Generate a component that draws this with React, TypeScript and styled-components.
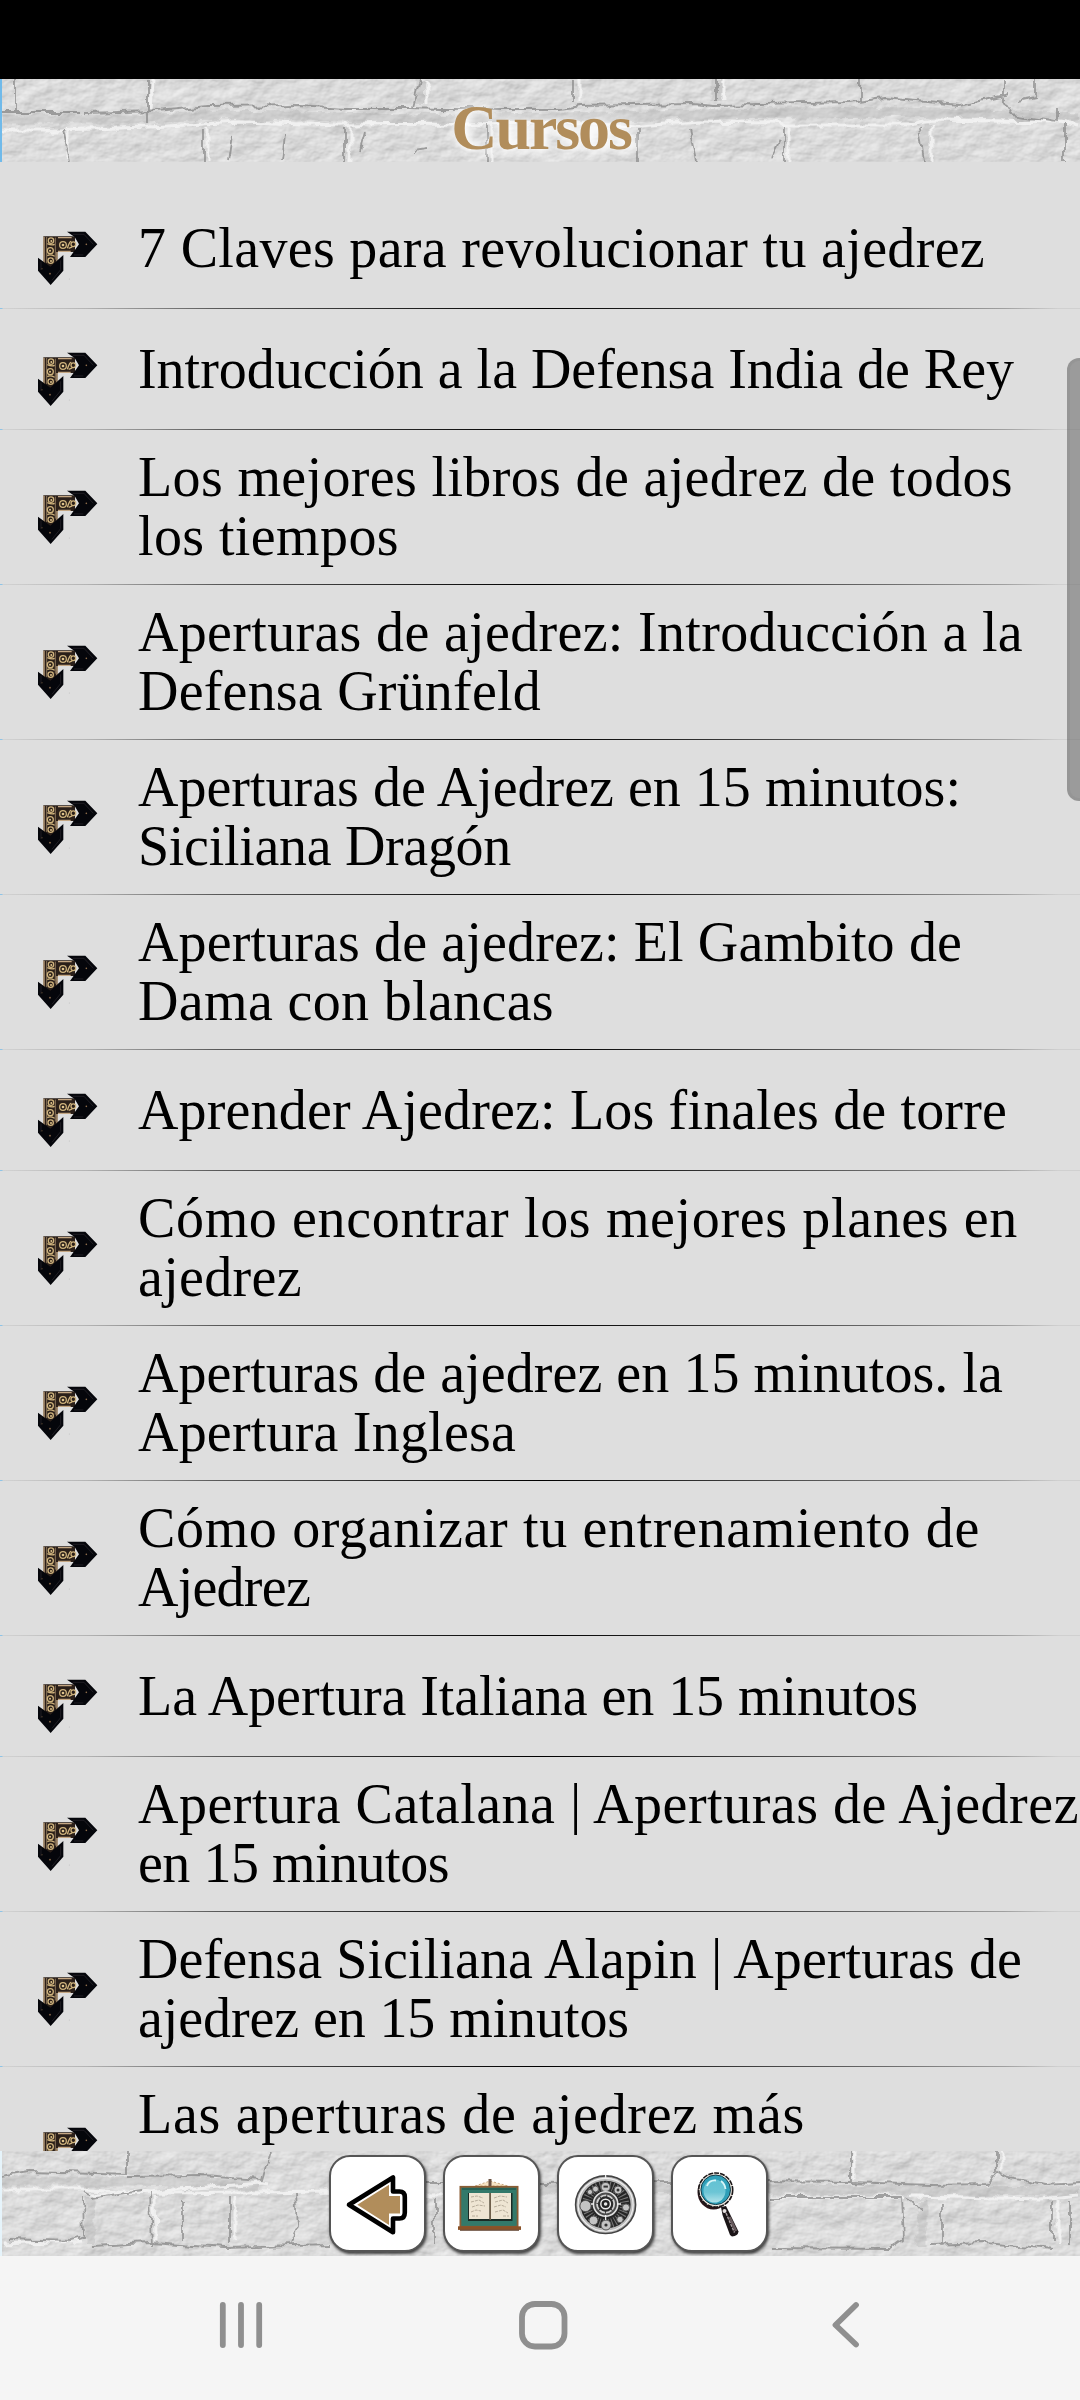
import React, { useLayoutEffect, useRef, useState } from "react";
import styled, { createGlobalStyle } from "styled-components";

const GlobalStyle = createGlobalStyle`
    body {
        margin: 0;
        background-color: #dedede;
    }
    * {
        box-sizing: border-box;
    }
`
const Screen = styled.div`
    display: flex;
    flex-direction: column;
    width: 1080px;
    height: 2400px;
    overflow: hidden;
    font-family: "Liberation Serif", serif;
`
const StatusBar = styled.div`
    flex: none;
    height: 79px;
    background-color: #000000;
`
const Wall = styled.div<{ $height: number; $edge: string }>`
    position: relative;
    display: flex;
    flex: none;
    justify-content: center;
    height: ${(p) => p.$height}px;
    border-left: 2px solid ${(p) => p.$edge};
    overflow: hidden;
`
const WallDrawing = styled.svg`
    position: absolute;
    top: 0;
    left: 0;
    z-index: 0;
`
const Title = styled.h1`
    position: relative;
    margin: 0;
    padding-top: 13px;
    font-size: 64px;
    line-height: 72px;
    font-weight: bold;
    letter-spacing: -2.1px;
    color: #b18d5b;
    text-shadow: 0 0 12px #ffffff, 3px 3px 8px #ffffff;
`
const ListArea = styled.div`
    position: relative;
    flex: none;
    height: 1989px;
    padding-top: 26px;
    overflow: hidden;
    background-color: #dedede;
`
const Row = styled.div`
    display: flex;
    align-items: center;
    gap: 28px;
    padding: 18px 0 18px 26px;
`
const RowIcon = styled.svg`
    flex: none;
    width: 84px;
    height: 84px;
`
const RowText = styled.div<{ $rows: number }>`
    display: flex;
    flex-direction: column;
    align-items: flex-start;
    height: ${(p) => p.$rows * 59}px;
`
const TextLine = styled.span`
    height: 59px;
    font-size: 56px;
    line-height: 58px;
    white-space: nowrap;
    color: #000000;
`
const Divider = styled.div`
    height: 1px;
    background: linear-gradient(
        90deg,
        #8fc4e6 0, #8fc4e6 2px, #d2d2d2 3px, #b4b4b4 8%, #5a5a5a 20%, #222222 38%,
        #000000 50%, #333333 66%, #6c6c6c 82%, #a0a0a0 93%, #d0d0d0 98%
    );
`
const ScrollThumb = styled.div`
    position: absolute;
    top: 196px;
    right: 0;
    width: 13px;
    height: 443px;
    border: 3px solid rgba(120, 120, 120, 0.15);
    border-right: none;
    border-radius: 12px 0 0 12px;
    background-color: rgba(100, 100, 100, 0.55);
`
const Tools = styled.div`
    position: relative;
    display: flex;
    gap: 18px;
    padding-top: 4px;
    margin-left: 14px;
`
const ToolButton = styled.button`
    width: 97px;
    height: 97px;
    margin-right: -1px;
    padding: 0;
    border: 2px solid #555555;
    border-radius: 21px;
    background-color: #ffffff;
    box-shadow: 1px 2px 3px rgba(0, 0, 0, 0.7);
    svg {
        display: block;
        margin: -2px;
    }
`
const NavBar = styled.div`
    display: flex;
    flex: 1;
    justify-content: space-between;
    align-items: flex-start;
    padding: 41px 205px 0 211px;
    background-color: #f5f5f5;
    svg {
        fill: none;
        stroke: #8f8f8f;
        stroke-width: 5.8;
        stroke-linecap: round;
        stroke-linejoin: round;
    }
`

// each entry: [text, drawn width]
type LineData = [string, number];

const courses: LineData[][] = [
    [["7 Claves para revolucionar tu ajedrez", 847]],
    [["Introducción a la Defensa India de Rey", 876]],
    [["Los mejores libros de ajedrez de todos", 875], ["los tiempos", 261]],
    [["Aperturas de ajedrez: Introducción a la", 885], ["Defensa Grünfeld", 403]],
    [["Aperturas de Ajedrez en 15 minutos:", 823], ["Siciliana Dragón", 373]],
    [["Aperturas de ajedrez: El Gambito de", 824], ["Dama con blancas", 416]],
    [["Aprender Ajedrez: Los finales de torre", 869]],
    [["Cómo encontrar los mejores planes en", 880], ["ajedrez", 164]],
    [["Aperturas de ajedrez en 15 minutos. la", 865], ["Apertura Inglesa", 378]],
    [["Cómo organizar tu entrenamiento de", 842], ["Ajedrez", 172]],
    [["La Apertura Italiana en 15 minutos", 780]],
    [["Apertura Catalana | Aperturas de Ajedrez", 941], ["en 15 minutos", 311]],
    [["Defensa Siciliana Alapin | Aperturas de", 884], ["ajedrez en 15 minutos", 491]],
    [["Las aperturas de ajedrez más", 667]],
];

const FittedLine = ({ text, width }: { text: string; width: number }) => {
    const lineRef = useRef<HTMLSpanElement>(null);
    const [spacing, setSpacing] = useState(0);

    useLayoutEffect(() => {
        if (lineRef.current) {
            const natural = lineRef.current.getBoundingClientRect().width;
            setSpacing((width - natural) / text.length);
        }
    }, [text, width]);

    return <TextLine ref={lineRef} style={{ letterSpacing: `${spacing}px` }}>{text}</TextLine>
};

const CourseIcon = () => (
    <RowIcon viewBox="0 0 84 84">
        <g transform="translate(4 14.3) scale(0.3333)">
            <path d="M40 48H135V95H83V150H40Z" fill="#2a1f19" />
            <path d="M42 49V135M81 95V125M84 52H125M84 93H122" stroke="#c4a682" strokeWidth="4" />
            <path d="M50 50V128M76 52V118" stroke="#8a735a" strokeWidth="3" />
            <g fill="none" stroke="#d0b47e" strokeWidth="3.8">
                <circle cx="63" cy="61" r="8" />
                <circle cx="61" cy="91" r="9" />
                <circle cx="62" cy="121" r="8" />
                <circle cx="99" cy="74" r="10" />
                <circle cx="130" cy="72" r="7" />
                <path d="M52 70Q65 76 74 72M52 106Q60 101 74 108M112 84Q120 60 124 64M116 84L127 80" />
            </g>
            <g fill="#e0c48c">
                <circle cx="64" cy="62" r="3" />
                <circle cx="60" cy="91" r="3" />
                <circle cx="99" cy="74" r="4" />
                <circle cx="63" cy="122" r="3" />
            </g>
            <path d="M111 34H166L202 72L166 110H120L147 72L134 50Z" fill="#05060b" />
            <path d="M24 112L61 139L100 104V151L62 194L24 151Z" fill="#05060b" />
            <path d="M128 42H162L190 72M132 104H160M33 124V149M92 120V148L66 180" fill="none" stroke="#2d2b31" strokeWidth="2" />
            <circle cx="169" cy="72" r="2.5" fill="#94724f" />
            <circle cx="60" cy="160" r="2.5" fill="#94724f" />
            <circle cx="36" cy="145" r="1.5" fill="#94724f" />
            <circle cx="118" cy="176" r="1.5" fill="#bdbdbd" />
        </g>
    </RowIcon>
);

interface WallProps {
    id: string;
    height: number;
    dark: string;
    light: string;
    shade: string;
    seed: number;
}

const BrickWall = ({ id, height, dark, light, shade, seed }: WallProps) => (
    <WallDrawing width="1078" height={height} viewBox={`2 0 1078 ${height}`}>
        <defs>
            <filter id={`${id}-plaster`} x="0" y="0" width="100%" height="100%" colorInterpolationFilters="sRGB">
                <feTurbulence type="fractalNoise" baseFrequency="0.04 0.06" numOctaves="4" seed={seed} />
                <feDiffuseLighting surfaceScale="1.3" diffuseConstant="1" lightingColor="#f1f1f1">
                    <feDistantLight azimuth="235" elevation="65" />
                </feDiffuseLighting>
            </filter>
            <filter id={`${id}-rough`} x="-2%" y="-10%" width="104%" height="120%">
                <feTurbulence type="fractalNoise" baseFrequency="0.06" numOctaves="3" seed={seed + 2} result="n" />
                <feDisplacementMap in="SourceGraphic" in2="n" scale="10" xChannelSelector="R" yChannelSelector="G" />
                <feGaussianBlur stdDeviation="0.6" />
            </filter>
        </defs>
        <rect width="1080" height={height} filter={`url(#${id}-plaster)`} />
        <g fill="none" filter={`url(#${id}-rough)`}>
            <path d={shade} stroke="#a8a8a8" strokeWidth="9" opacity="0.3" />
            <path d={light} stroke="#f4f4f4" strokeWidth="3" opacity="0.85" />
            <path d={dark} stroke="#858585" strokeWidth="1.8" opacity="0.75" />
        </g>
    </WallDrawing>
);

const App = () => {
    return <>
        <GlobalStyle />
        <Screen>
            <StatusBar />
            <Wall $height={83} $edge="#70baea">
                <BrickWall
                    id="top"
                    height={83}
                    seed={4}
                    dark="M2 33H80M84 34L155 32L210 27L300 26L345 29H410L440 30L560 30L580 27L690 25L715 27L850 24L885 19L960 26L1010 15M15 0V32M148 0V45M420 0L412 28M573 0V24M716 0V22M860 0V22M1003 0V22L1012 36L1058 43V28M1036 0V18L1015 22M63 50L70 83M203 50V83M345 48V83M232 56L228 83M285 55L282 80M412 72L425 70M487 45V83M365 52L360 70M638 50V83M690 50L697 83M785 47V83M920 48L925 83M1065 45V83M780 60L770 80"
                    light="M2 51H60L150 48L240 43L340 46L460 45L560 44L640 47L700 42L775 43L785 46H910L930 41L1060 43L1080 47M152 0L150 30M426 0V25M580 0V24M722 0V20M68 48V80M208 48V83M350 48V83M492 45V83M790 47V83M932 45V83"
                    shade="M2 40H150L200 36L305 37L400 40L560 38L700 35L900 33L1080 38M927 45V83M716 0V22M420 0V25"
                />
                <Title>Cursos</Title>
            </Wall>
            <ListArea>
                {courses.map((lines, i) => (
                    <React.Fragment key={lines[0][0]}>
                        <Row>
                            <CourseIcon />
                            {/* the last course runs on below the visible area */}
                            <RowText $rows={i === courses.length - 1 ? 2 : lines.length}>
                                {lines.map(([text, width]) => <FittedLine key={text} text={text} width={width} />)}
                            </RowText>
                        </Row>
                        <Divider />
                    </React.Fragment>
                ))}
                <ScrollThumb />
            </ListArea>
            <Wall $height={105} $edge="#e6f4fb">
                <BrickWall
                    id="bottom"
                    height={105}
                    seed={9}
                    dark="M2 25L30 20L128 23V0M130 26L200 25L262 29L270 0M85 40L90 43M90 47L140 40M83 45L84 86L70 90L10 88M150 42L152 96M230 45V94M295 42L297 75L290 94M92 95L150 92L225 97L330 94M183 50V88M420 32H540L680 31L760 30L850 31L930 34L990 33L998 22L1010 28L1045 34L1080 32M852 0V30M996 0V22M770 46H902L904 88L890 98L770 97M907 45L920 60M942 50V95M1052 50V88M930 94L985 92L1052 98M1070 50V95M435 48V92"
                    light="M2 38H90L150 42L180 38L262 32L268 33M90 43L330 40L430 45L540 44M155 45L156 90M235 45V90M765 46H905M912 45L1040 48L1080 44M855 0V28M1002 0V22M1058 48V90M2 93L80 90"
                    shade="M2 30H140L260 34M540 37L760 38L1080 40M90 46V92M922 50V95"
                />
                <Tools>
                    <ToolButton aria-label="Atrás">
                        <svg width="96" height="96" viewBox="0 0 96 96">
                            <path d="M20 48.7L64 21.5V35.5H70.5Q75.8 35.5 75.8 41V56.5Q75.8 62.5 70.5 62.5H64V76.2Z" fill="#fff" stroke="#000" strokeWidth="4.6" strokeLinejoin="round" />
                            <path d="M28.3 48.7L60 28.7V40H71V57.5H60V69Z" fill="#b18d5b" />
                        </svg>
                    </ToolButton>
                    <ToolButton aria-label="Cursos">
                        <svg width="96" height="96" viewBox="0 0 96 96">
                            <path d="M32 30L47 25L65 30Z" fill="#f7e3c4" stroke="#b99468" strokeWidth="0.8" strokeDasharray="2 2" />
                            <rect x="45.5" y="23" width="3" height="8" fill="#6b5243" />
                            <rect x="17.4" y="30.8" width="57.2" height="40" fill="#33796a" stroke="#8a5c34" strokeWidth="1.8" />
                            <path d="M19 33H73" stroke="#1d4c42" strokeWidth="1" />
                            <rect x="25" y="37" width="44.5" height="28" fill="#1b2b25" />
                            <path d="M26 37H46.5V63H26ZM48 37H68V63H48Z" fill="#eee5d3" />
                            <path d="M47.2 37V64" stroke="#7a6650" strokeWidth="1.4" />
                            <path d="M28 41L34 40L40 42M28 46L36 44L41 47M29 51L35 49L42 50M28 56L33 54L38 55M29 60H35M51 42L57 40L64 41M52 46L60 44L65 47M51 51L58 49L63 51M52 56L60 54L65 57M60 60H66" fill="none" stroke="#b0a694" strokeWidth="0.9" strokeDasharray="3 1" />
                            <rect x="15" y="70.3" width="63" height="3.6" fill="#8a5227" />
                            <path d="M17 74.2H76" stroke="#4e2c17" strokeWidth="1" />
                        </svg>
                    </ToolButton>
                    <ToolButton aria-label="Ajustes">
                        <svg width="96" height="96" viewBox="0 0 96 96">
                            <ellipse cx="48.6" cy="48.7" rx="30" ry="28.8" fill="#bcbcbc" stroke="#444" strokeWidth="1.6" />
                            <ellipse cx="48.6" cy="48.7" rx="27.5" ry="26.4" fill="none" stroke="#eee" strokeWidth="1.2" />
                            <ellipse cx="48.6" cy="48.7" rx="25" ry="24" fill="#262626" />
                            <circle cx="48.6" cy="48.7" r="19" fill="none" stroke="#777" strokeWidth="9" strokeDasharray="1 2.2" />
                            <g fill="#c4c4c4" stroke="#555" strokeWidth="1">
                                <circle cx="48.6" cy="31" r="4.6" />
                                <circle cx="61" cy="34" r="4" />
                                <circle cx="38.5" cy="33" r="3" />
                                <circle cx="33" cy="36" r="2.6" />
                                <circle cx="28.5" cy="50" r="5.6" />
                                <circle cx="69" cy="51.5" r="3.6" />
                                <circle cx="36.5" cy="64.5" r="4.4" />
                                <circle cx="49" cy="69" r="5" />
                                <circle cx="63" cy="63.5" r="3.2" />
                            </g>
                            <g fill="#333">
                                <rect x="46.5" y="29.6" width="4.4" height="2" />
                                <circle cx="61" cy="34" r="1.5" />
                                <circle cx="49" cy="69" r="1.6" />
                            </g>
                            <circle cx="48.6" cy="48" r="12.2" fill="#4b4b4b" stroke="#dedede" strokeWidth="1.6" />
                            <circle cx="48.6" cy="48" r="8.6" fill="#2a2a2a" stroke="#cfcfcf" strokeWidth="1.8" strokeDasharray="6 1" />
                            <circle cx="48.6" cy="48" r="4.8" fill="#222" stroke="#ededed" strokeWidth="1.4" />
                            <circle cx="48.6" cy="48" r="1.8" fill="#e8e8e8" />
                            <path d="M48.6 19V23M34 48H37M60 48H64M48.6 59V64" stroke="#eee" strokeWidth="1.3" />
                        </svg>
                    </ToolButton>
                    <ToolButton aria-label="Buscar">
                        <svg width="96" height="96" viewBox="0 0 96 96">
                            <defs>
                                <linearGradient id="lens" x1="0" y1="0" x2="0" y2="1">
                                    <stop offset="0" stopColor="#62c2d3" />
                                    <stop offset="0.55" stopColor="#6cc5d5" />
                                    <stop offset="1" stopColor="#b2e3ea" />
                                </linearGradient>
                            </defs>
                            <path d="M50 51L55 50L58 56L67.5 75.5Q67 80 61 80.5L59 79L51.5 59Z" fill="#1a1416" />
                            <path d="M55 57L63.5 76.5" stroke="#a9a0a2" strokeWidth="1.5" strokeDasharray="3 1" />
                            <path d="M58.5 61L65 75" stroke="#66595c" strokeWidth="2.6" />
                            <circle cx="53.5" cy="55" r="2" fill="#e6e0e0" />
                            <ellipse cx="42.5" cy="36" rx="16" ry="17.5" fill="#2a1519" />
                            <circle cx="44.7" cy="34" r="17" fill="#efe8e0" stroke="#1b1718" strokeWidth="1.6" strokeDasharray="5 1" />
                            <circle cx="44.7" cy="33.8" r="14.8" fill="#2f9fb8" stroke="#153b47" strokeWidth="1" />
                            <ellipse cx="43.5" cy="35" rx="11" ry="11.5" fill="url(#lens)" />
                            <path d="M36 30Q38 24 45 24.5M50 25Q54 28 54.5 33" fill="none" stroke="#d9f5f8" strokeWidth="1.8" />
                        </svg>
                    </ToolButton>
                </Tools>
            </Wall>
            <NavBar>
                <svg width="60" height="56" viewBox="211 2297 60 56">
                    <path d="M222.8 2305V2345M241 2305V2345M259.2 2305V2345" />
                </svg>
                <svg width="60" height="56" viewBox="513 2297 60 56">
                    <rect x="522" y="2304" width="42.5" height="42.5" rx="13" />
                </svg>
                <svg width="60" height="56" viewBox="815 2297 60 56">
                    <path d="M856 2305L835.5 2325L856 2344.5" />
                </svg>
            </NavBar>
        </Screen>
    </>
}

export default App;
